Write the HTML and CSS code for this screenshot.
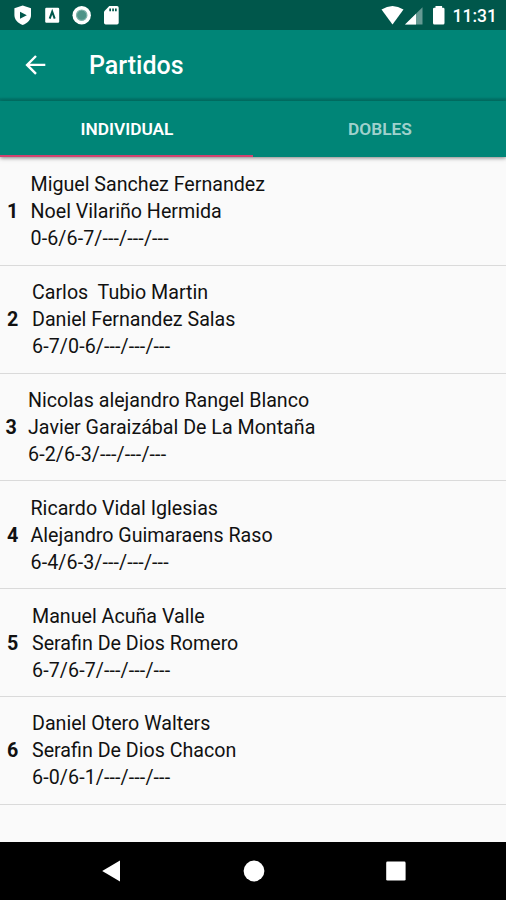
FILE: index.html
```
<!DOCTYPE html>
<html lang="es">
<head>
  <meta charset="UTF-8">
  <meta name="viewport" content="width=device-width, initial-scale=1">
  <title>Partidos</title>
  <link rel="stylesheet" href="styles.css">
</head>
<body>
  <div class="screen">
    <!-- Barra de estado -->
    <div class="status-bar">
      <svg class="status-icons" width="130" height="30" viewBox="0 0 130 30">
        <path fill="#fff" d="M22.7 5.5 31 8.2V15c0 4.800-3.300 8-8.300 10-5-2-8.300-5.200-8.300-10V8.200z"/>
        <path fill="#00574b" d="M20 11.700v7l6.800-3.500z"/>
        <rect fill="#fff" x="45.200" y="7.800" width="14" height="15" rx="1.200"/>
        <path fill="none" stroke="#00574b" stroke-width="2" d="M49.700 18.600 52.200 11.600 54.700 18.600"/>
        <circle fill="#fff" cx="81.700" cy="15.200" r="9.200"/>
        <circle fill="#4f9488" stroke="#7fb3aa" stroke-width="1.200" cx="81.700" cy="15.200" r="5.200"/>
        <path fill="#fff" d="M109.300 6h7.700q1.700 0 1.700 1.700v15q0 1.700-1.700 1.700h-11.300q-1.700 0-1.700-1.700V11.500z"/>
        <path fill="#00574b" d="M109.300 8.500h1.700v2.800h-1.700zM112.200 8.500h1.700v2.800h-1.700zM115 8.500h1.700v2.800h-1.700z"/>
      </svg>
      <div class="status-right">
        <svg width="66" height="30" viewBox="0 0 66 30">
          <path fill="#fff" d="M1.500 9.600Q12.500 2.200 23.500 9.600L12.500 24.400z"/>
          <path fill="#fff" opacity=".4" d="M42.500 7.300v17.300H25z"/>
          <path fill="#fff" d="M36 13.700v10.900H25z"/>
          <path fill="#fff" d="M55.500 6h6.600v1.700h1q1.400 0 1.400 1.400v14q0 1.500-1.400 1.500h-8.700q-1.400 0-1.400-1.500v-14q0-1.400 1.400-1.400h1.100z"/>
        </svg>
        <span class="clock">11:31</span>
      </div>
    </div>

    <!-- Cabecera -->
    <header class="toolbar">
      <svg class="back" width="22" height="22" viewBox="0 0 22 22">
        <path d="M20.300 10.900H2.500M11 2 2.100 10.900 11 19.800" fill="none" stroke="#fff" stroke-width="2.400"/>
      </svg>
      <h1 class="title">Partidos</h1>
    </header>

    <nav class="tabs">
      <div class="tab active">INDIVIDUAL</div>
      <div class="tab">DOBLES</div>
    </nav>

    <!-- Lista de partidos -->
    <main class="matches">
      <div class="match">
        <span class="number">1</span>
        <div class="players"><p>Miguel Sanchez Fernandez</p><p>Noel Vilariño Hermida</p><p class="score">0-6/6-7/---/---/---</p></div>
      </div>
      <div class="match wide">
        <span class="number">2</span>
        <div class="players"><p>Carlos&nbsp; Tubio Martin</p><p>Daniel Fernandez Salas</p><p class="score">6-7/0-6/---/---/---</p></div>
      </div>
      <div class="match narrow">
        <span class="number">3</span>
        <div class="players"><p>Nicolas alejandro Rangel Blanco</p><p>Javier Garaizábal De La Montaña</p><p class="score">6-2/6-3/---/---/---</p></div>
      </div>
      <div class="match">
        <span class="number">4</span>
        <div class="players"><p>Ricardo Vidal Iglesias</p><p>Alejandro Guimaraens Raso</p><p class="score">6-4/6-3/---/---/---</p></div>
      </div>
      <div class="match wide">
        <span class="number">5</span>
        <div class="players"><p>Manuel Acuña Valle</p><p>Serafin De Dios Romero</p><p class="score">6-7/6-7/---/---/---</p></div>
      </div>
      <div class="match wide">
        <span class="number">6</span>
        <div class="players"><p>Daniel Otero Walters</p><p>Serafin De Dios Chacon</p><p class="score">6-0/6-1/---/---/---</p></div>
      </div>
    </main>

    <!-- Botones de navegación -->
    <footer class="nav-bar">
      <svg width="22" height="22" viewBox="0 0 22 22"><path fill="#fff" d="M19 .6v20.800L1.200 11z"/></svg>
      <svg width="22" height="22" viewBox="0 0 22 22"><circle fill="#fff" cx="11" cy="11" r="10.400"/></svg>
      <svg width="22" height="22" viewBox="0 0 22 22"><rect fill="#fff" x="1.200" y="1.600" width="19.400" height="19" rx="1.300"/></svg>
    </footer>
  </div>
</body>
</html>
```
FILE: styles.css
```
* {
  box-sizing: border-box;
}
body {
  margin: 0;
  font-family: Roboto, "Liberation Sans", sans-serif;
  background: #fafafa;
}
.screen {
  display: flex;
  flex-direction: column;
  width: 506px;
  height: 900px;
  overflow: hidden;
}
svg {
  display: block;
  flex-shrink: 0;
}

/* Barra de estado */
.status-bar {
  display: flex;
  justify-content: space-between;
  height: 30px;
  flex-shrink: 0;
  background: #00574b;
}
.status-right {
  display: flex;
  align-items: center;
  padding-right: 9px;
}
.clock {
  width: 45px;
  margin-left: 6px;
  padding-top: 1px;
  color: #fff;
  font-size: 17.5px;
  font-weight: 500;
  line-height: 20px;
  text-align: right;
  white-space: nowrap;
}

/* Cabecera */
.toolbar {
  display: flex;
  align-items: center;
  height: 71px;
  flex-shrink: 0;
  padding-left: 25px;
  background: linear-gradient(#008577 67px, #00756a 69px, #007b6e 71px);
}
.back {
  margin-top: -1px;
}
.title {
  margin: 0 0 0 42px;
  color: #fff;
  font-size: 25px;
  font-weight: 500;
  line-height: 30px;
}
.tabs {
  display: flex;
  position: relative;
  height: 56px;
  flex-shrink: 0;
  background: #008577;
  box-shadow: 0 1px 4px rgba(0, 0, 0, .5);
}
.tab {
  flex: 1;
  padding: 2px 0 0 1px;
  color: rgba(255, 255, 255, .65);
  font-size: 17.300px;
  font-weight: 600;
  line-height: 53px;
  text-align: center;
}
.tab.active {
  color: #fff;
  border-bottom: 2px solid #d1426f;
}

/* Lista de partidos */
.matches {
  flex: 1;
  padding-top: 1px;
  background: #fafafa;
}
.match {
  display: grid;
  grid-template-columns: 23.500px 1fr;
  align-items: center;
  height: 107.800px;
  padding: 1px 0 0 7px;
  border-bottom: 1px solid #dadada;
  color: #111;
}
.match.wide {
  grid-template-columns: 25px 1fr;
}
.match.narrow {
  grid-template-columns: 22.500px 1fr;
  padding-left: 5.500px;
}
.number {
  font-size: 19.700px;
  font-weight: 700;
  line-height: 27px;
}
.players p {
  margin: 0;
  font-size: 19.650px;
  line-height: 27px;
  white-space: nowrap;
}
.players .score {
  letter-spacing: .1px;
}

/* Botones de navegación */
.nav-bar {
  display: flex;
  justify-content: space-between;
  align-items: center;
  height: 58px;
  flex-shrink: 0;
  padding: 0 99px 0 101px;
  background: #000;
}
```
